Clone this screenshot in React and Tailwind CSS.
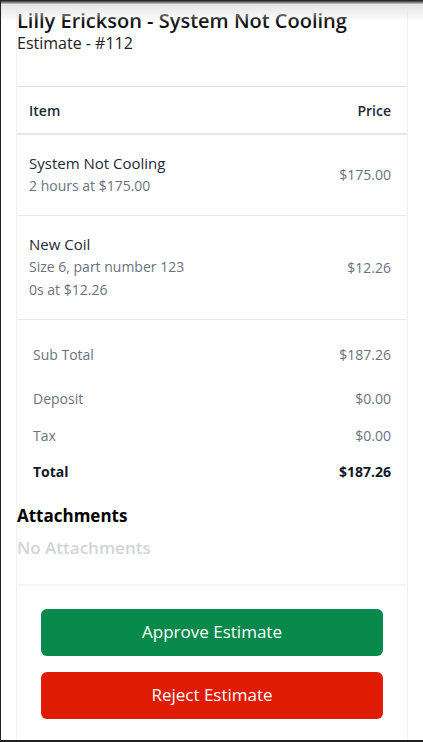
import React from "react";

const FONT = { fontFamily: '"Open Sans", "Liberation Sans", sans-serif' };

const LINES = [
  { name: "System Not Cooling", details: ["2 hours at $175.00"], price: "$175.00" },
  { name: "New Coil", details: ["Size 6, part number 123", "0s at $12.26"], price: "$12.26" },
];

function LineRow({ line }) {
  return (
    <div className="flex items-center justify-between border-b border-[#e5e7eb] pl-3 pr-4 pt-[17px] pb-[18px]">
      <div className="flex flex-col">
        <span className="text-[15px] leading-[22px] text-[#1f2937]">{line.name}</span>
        {line.details.map((d) => (
          <span key={d} className="text-[14px] leading-[23px] text-[#6b7280]">
            {d}
          </span>
        ))}
      </div>
      <span className="text-[14px] text-[#6b7280]">{line.price}</span>
    </div>
  );
}

function TotalRow({ label, value, bold, className }) {
  return (
    <div className={`flex items-center justify-between pl-4 pr-4 ${className || ""}`}>
      <span className={bold ? "text-[14px] font-bold text-[#111827]" : "text-[14px] text-[#6b7280]"}>
        {label}
      </span>
      <span className={bold ? "text-[14px] font-bold text-[#111827]" : "text-[14px] text-[#6b7280]"}>
        {value}
      </span>
    </div>
  );
}

export default function App() {
  return (
    <div
      className="relative w-[423px] h-[742px] overflow-hidden bg-white border-l border-[#222] border-b-2 border-b-[#222]"
      style={FONT}
    >
      {/* shadow from the app bar above */}
      <div className="pointer-events-none absolute inset-x-0 top-0 h-[22px] bg-gradient-to-b from-[#151515] via-[#e4e4e4] via-20% to-transparent" />

      <div className="ml-[15px] w-[392px] h-full border-x border-[#f1f1f1]">
        <div className="pt-[8px] pb-[20px]">
          <h1 className="text-[20px] leading-[25px] font-semibold text-[#111]">
            Lilly Erickson - System Not Cooling
          </h1>
          <p className="text-[16px] leading-[20px] text-[#222]">Estimate - #112</p>
        </div>

        <div className="mt-[13px] border-t border-[#dfe3e8]">
          <div className="flex items-center justify-between border-b-2 border-[#e5e7eb] pl-3 pr-4 h-[48px]">
            <span className="text-[14px] font-semibold text-[#1f2937]">Item</span>
            <span className="text-[14px] font-semibold text-[#1f2937]">Price</span>
          </div>
          {LINES.map((l) => (
            <LineRow key={l.name} line={l} />
          ))}
        </div>

        <div className="pt-[24px]">
          <TotalRow label="Sub Total" value="$187.26" />
          <TotalRow label="Deposit" value="$0.00" className="mt-[23px]" />
          <TotalRow label="Tax" value="$0.00" className="mt-[16px]" />
          <TotalRow label="Total" value="$187.26" bold className="mt-[15px]" />
        </div>

        <div className="mt-[23px]">
          <h2 className="text-[17px] leading-[22px] font-bold text-black">Attachments</h2>
          <p className="mt-[8px] text-[17px] font-semibold text-[#d1d5db]">No Attachments</p>
        </div>

        <div className="mt-[23px] border-t-2 border-[#f3f4f6] flex flex-col gap-[16px] px-6 pt-[23px]">
          <button className="h-[47px] w-full rounded-md bg-[#06894a] text-white text-[17px]">
            Approve Estimate
          </button>
          <button className="h-[47px] w-full rounded-md bg-[#e01b03] text-white text-[17px]">
            Reject Estimate
          </button>
        </div>
      </div>
    </div>
  );
}
